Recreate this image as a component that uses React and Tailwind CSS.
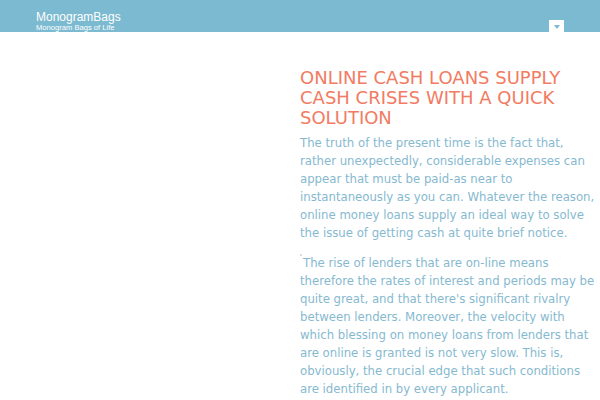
import React from "react";

const Header = () => (
  <header className="h-8 bg-[#7bbad0]">
    <div className="flex justify-between pl-9 pr-9">
      <div className="pt-[11px] font-['Liberation_Sans',Arial,sans-serif] text-white">
        <div className="text-[12px] leading-[13px]">MonogramBags</div>
        <div className="text-[7.6px] leading-[8px]">Monogram Bags of Life</div>
      </div>
      <button className="mt-5 flex h-[13px] w-[15px] items-center justify-center bg-white">
        <span className="h-0 w-0 border-x-[3px] border-t-[4px] border-x-transparent border-t-[#7bbad0]" />
      </button>
    </div>
  </header>
);

export default function App() {
  return (
    <div className="min-h-[400px] bg-white">
      <Header />
      <main className="flex">
        <aside className="w-[300px] shrink-0" />
        <article className="pt-[36px]">
          <h1 className="font-['DejaVu_Sans',sans-serif] text-[18px] leading-[20px] uppercase text-[#f27b62]">
            Online Cash Loans Supply Cash Crises With A Quick Solution
          </h1>
          <div className="font-['DejaVu_Sans_Condensed','DejaVu_Sans',sans-serif] text-[13px] leading-[18.1px] text-[#86b9cf]">
            <p className="mt-[6px]">
              The truth of the present time is the fact that, rather
              unexpectedly, considerable expenses can appear that must be
              paid-as near to instantaneously as you can. Whatever the reason,
              online money loans supply an ideal way to solve the issue of
              getting cash at quite brief notice.
            </p>
            <p className="mt-[11px]">
              <span className="mr-[1px] inline-block h-[2px] w-[2px] bg-[#d9dde0] align-top" />
              The rise of lenders that are on-line means therefore the rates of
              interest and periods may be quite great, and that there's
              significant rivalry between lenders. Moreover, the velocity with
              which blessing on money loans from lenders that are online is
              granted is not very slow. This is, obviously, the crucial edge that
              such conditions are identified in by every applicant.
            </p>
          </div>
        </article>
      </main>
    </div>
  );
}
